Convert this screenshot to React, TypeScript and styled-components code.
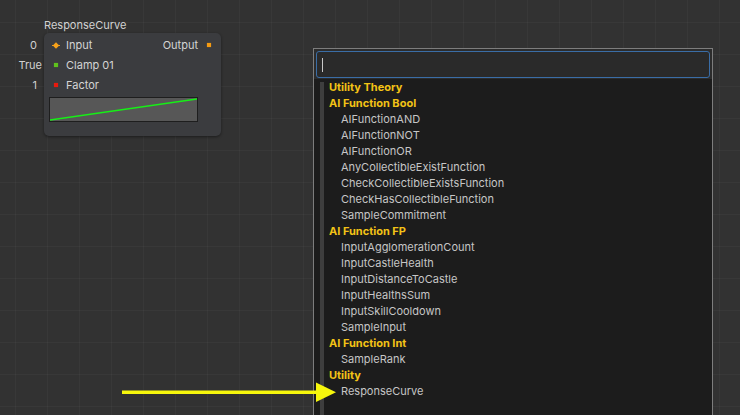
import React from 'react';
import styled, { createGlobalStyle } from 'styled-components';

const GlobalStyle = createGlobalStyle`
  html, body {
    margin: 0;
    padding: 0;
    width: 740px;
    height: 415px;
    overflow: hidden;
    background: #333333;
  }
  * {
    box-sizing: border-box;
  }
`;

const Canvas = styled.div`
  position: relative;
  width: 740px;
  height: 415px;
  overflow: hidden;
  font-family: 'Inter', 'Noto Sans', sans-serif;
  background-color: #323232;
  background-image:
    linear-gradient(to right, rgba(255, 255, 255, 0.03) 1px, transparent 1px),
    linear-gradient(to bottom, rgba(255, 255, 255, 0.03) 1px, transparent 1px);
  background-size: 32px 32px;
  background-position: 15px 22px;
`;

/* ---------- graph node ---------- */

const Node = styled.div`
  position: absolute;
  left: 44px;
  top: 17px;
  width: 177px;
`;

const NodeTitle = styled.div`
  height: 16px;
  line-height: 16px;
  font-size: 11px;
  color: #d2d2d2;
`;

const NodeBody = styled.div`
  position: relative;
  height: 103px;
  padding: 2px 0 0 0;
  background: #3b3c3f;
  border-radius: 5px;
  box-shadow: 0 1px 3px rgba(0, 0, 0, 0.45);
`;

const PortRow = styled.div`
  position: relative;
  display: flex;
  align-items: center;
  height: 20px;
  padding: 0 8px 0 8px;
  font-size: 11px;
  color: #d4d4d4;
`;

const PortLabel = styled.span`
  flex: 1;
  margin-left: 6px;
`;

const OutLabel = styled.span`
  margin-right: 7px;
`;

const Dot = styled.span<{ $color: string }>`
  display: inline-block;
  width: 4px;
  height: 4px;
  margin: 0 2px;
  background: ${(p) => p.$color};
  box-shadow: 0 0 1px ${(p) => p.$color};
`;

const InlineValue = styled.span<{ $shift: number }>`
  position: absolute;
  right: 100%;
  margin-right: ${(p) => p.$shift}px;
  font-size: 11px;
  color: #d0d0d0;
  white-space: nowrap;
`;

const CurveBox = styled.div`
  margin: 2px 0 0 5px;
  width: 149px;
  height: 25px;
  background: #575757;
  border: 1px solid #1e1e1e;
`;

const DiamondPort = () => (
  <svg width="8" height="7" viewBox="0 0 8 7">
    <path d="M0 3.5 H8" stroke="#f39a16" strokeWidth="1" />
    <path d="M4 0.3 L7.2 3.5 L4 6.7 L0.8 3.5 Z" fill="#f7a21a" />
  </svg>
);

/* ---------- search popup ---------- */

const Popup = styled.div`
  position: absolute;
  left: 313px;
  top: 48px;
  width: 400px;
  height: 380px;
  display: flex;
  flex-direction: column;
  border: 1px solid #7d7d7d;
  background: #1c1c1c;
`;

const SearchBar = styled.div`
  height: 30px;
  padding: 2px 2px 0 2px;
  background: #2c2c2c;
`;

const SearchInput = styled.div`
  height: 27px;
  border: 1px solid #3a6da6;
  border-radius: 3px;
  background: #2a2a2a;
  display: flex;
  align-items: center;
  padding-left: 5px;
`;

const Caret = styled.span`
  width: 1px;
  height: 14px;
  background: #c8c8c8;
`;

const ListArea = styled.div`
  flex: 1;
  display: flex;
  padding-left: 6px;
`;

const ScrollTrack = styled.div`
  width: 4px;
  margin-top: 3px;
  background: #3e3e3e;
`;

const List = styled.div`
  flex: 1;
  padding-left: 5px;
`;

const Row = styled.div<{ $header?: boolean }>`
  height: 16px;
  line-height: 16px;
  font-size: 11px;
  white-space: nowrap;
  padding-left: ${(p) => (p.$header ? 0 : 12)}px;
  font-weight: ${(p) => (p.$header ? 700 : 400)};
  color: ${(p) => (p.$header ? '#f3c316' : '#c6c6c6')};
`;

const ArrowLayer = styled.svg`
  position: absolute;
  left: 120px;
  top: 380px;
`;

type Entry = { label: string; header?: boolean };

const entries: Entry[] = [
  { label: 'Utility Theory', header: true },
  { label: 'AI Function Bool', header: true },
  { label: 'AIFunctionAND' },
  { label: 'AIFunctionNOT' },
  { label: 'AIFunctionOR' },
  { label: 'AnyCollectibleExistFunction' },
  { label: 'CheckCollectibleExistsFunction' },
  { label: 'CheckHasCollectibleFunction' },
  { label: 'SampleCommitment' },
  { label: 'AI Function FP', header: true },
  { label: 'InputAgglomerationCount' },
  { label: 'InputCastleHealth' },
  { label: 'InputDistanceToCastle' },
  { label: 'InputHealthsSum' },
  { label: 'InputSkillCooldown' },
  { label: 'SampleInput' },
  { label: 'AI Function Int', header: true },
  { label: 'SampleRank' },
  { label: 'Utility', header: true },
  { label: 'ResponseCurve' },
];

const App: React.FC = () => {
  return (
    <>
      <GlobalStyle />
      <Canvas>
        <Node>
          <NodeTitle>ResponseCurve</NodeTitle>
          <NodeBody>
            <PortRow>
              <InlineValue $shift={7}>0</InlineValue>
              <DiamondPort />
              <PortLabel>Input</PortLabel>
              <OutLabel>Output</OutLabel>
              <Dot $color="#f59b12" />
            </PortRow>
            <PortRow>
              <InlineValue $shift={2}>True</InlineValue>
              <Dot $color="#5ec21c" />
              <PortLabel>Clamp 01</PortLabel>
            </PortRow>
            <PortRow>
              <InlineValue $shift={7}>1</InlineValue>
              <Dot $color="#e8190e" />
              <PortLabel>Factor</PortLabel>
            </PortRow>
            <CurveBox>
              <svg width="147" height="23" viewBox="0 0 147 23">
                <line x1="0" y1="22" x2="147" y2="1" stroke="#16f016" strokeWidth="1.6" />
              </svg>
            </CurveBox>
          </NodeBody>
        </Node>

        <Popup>
          <SearchBar>
            <SearchInput>
              <Caret />
            </SearchInput>
          </SearchBar>
          <ListArea>
            <ScrollTrack />
            <List>
              {entries.map((e) => (
                <Row key={e.label} $header={e.header}>
                  {e.label}
                </Row>
              ))}
            </List>
          </ListArea>
        </Popup>

        <ArrowLayer width="230" height="26" viewBox="0 0 230 26">
          <rect x="2" y="10.5" width="198" height="3.5" fill="#f6f60c" />
          <path d="M196 2.5 L216 12.2 L196 22 Z" fill="#f6f60c" />
        </ArrowLayer>
      </Canvas>
    </>
  );
};

export default App;
